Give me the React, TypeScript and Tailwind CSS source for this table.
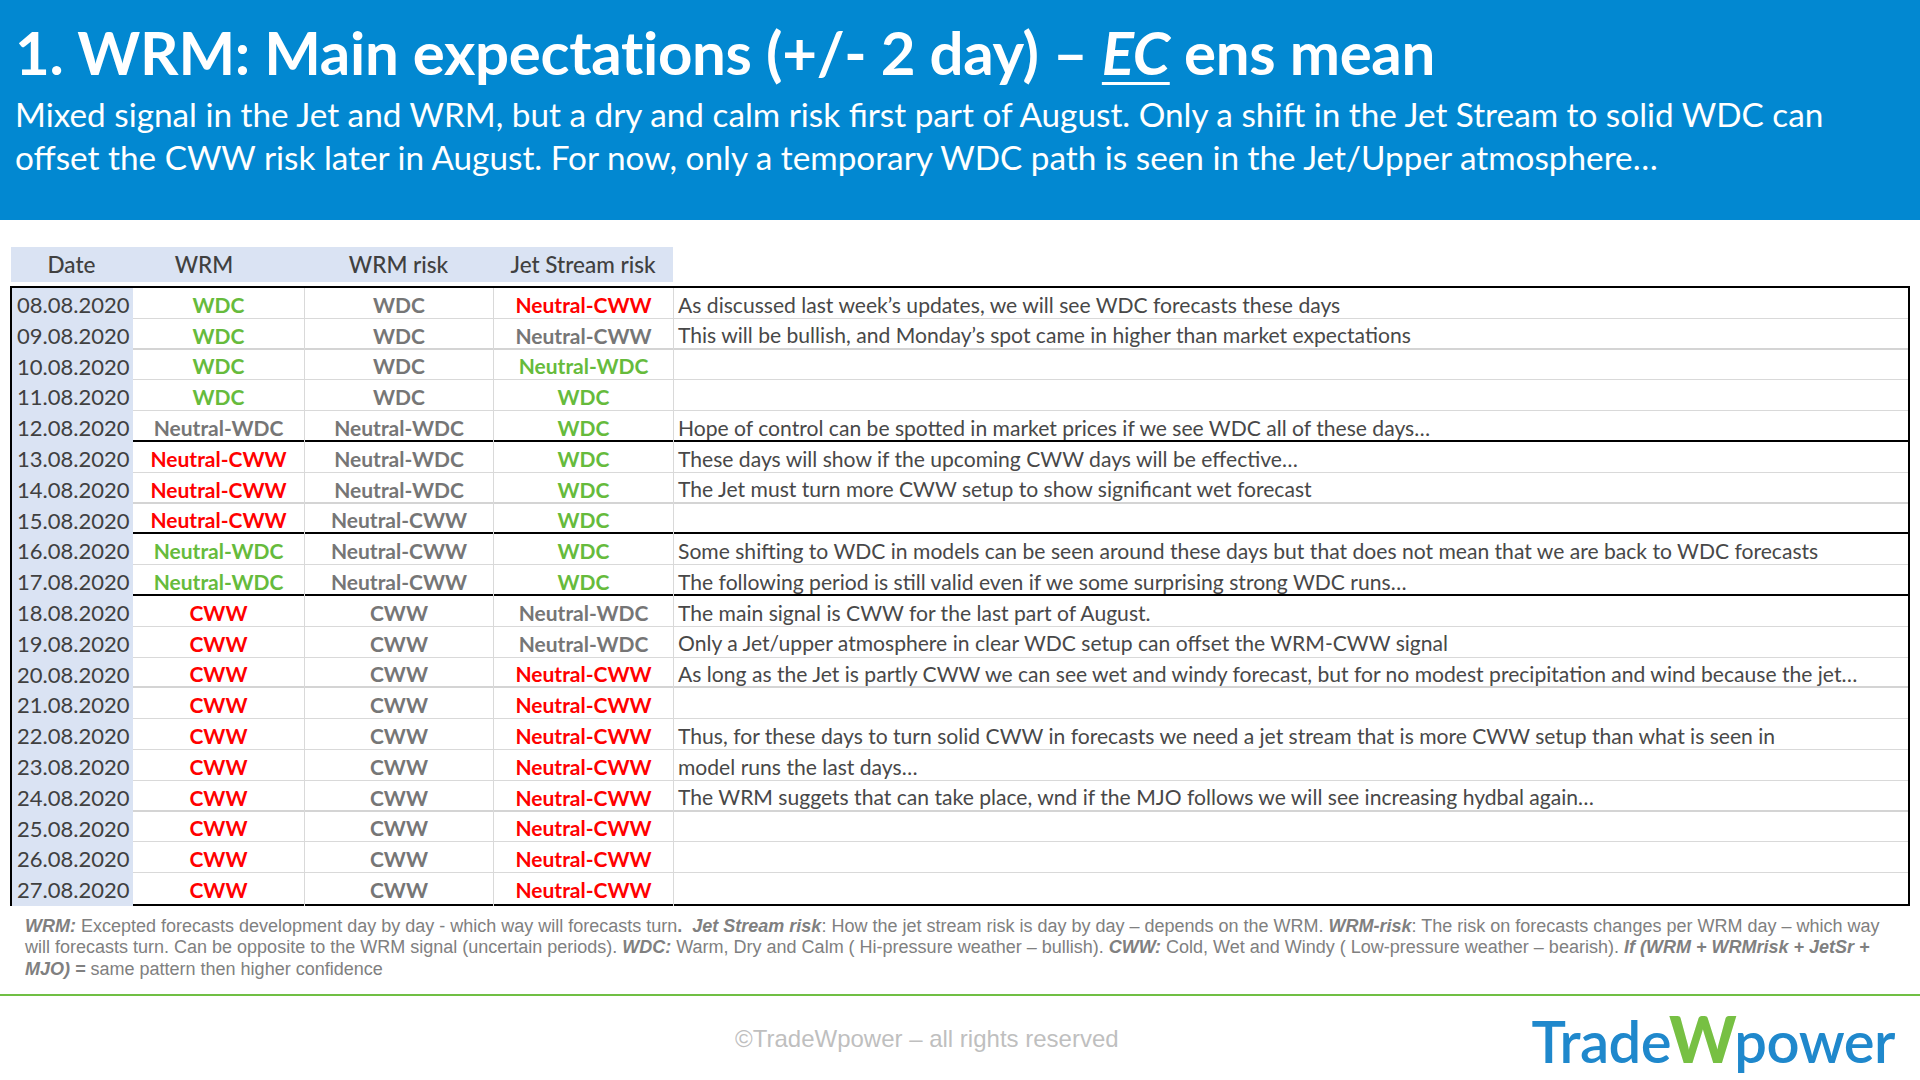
import React from "react";

type Tone = "g" | "r" | "n";

const tone: Record<Tone, string> = {
  g: "text-[#66bb3c]",
  r: "text-[#ff0000]",
  n: "text-[#767676]",
};

type Row = {
  date: string;
  wrm: [string, Tone];
  risk: [string, Tone];
  jet: [string, Tone];
  note?: string;
  line?: "group" | "soft";
};

const rows: Row[] = [
  { date: "08.08.2020", wrm: ["WDC", "g"], risk: ["WDC", "n"], jet: ["Neutral-CWW", "r"], note: "As discussed last week’s updates, we will see WDC forecasts these days" },
  { date: "09.08.2020", wrm: ["WDC", "g"], risk: ["WDC", "n"], jet: ["Neutral-CWW", "n"], note: "This will be bullish, and Monday’s spot came in higher than market expectations", line: "soft" },
  { date: "10.08.2020", wrm: ["WDC", "g"], risk: ["WDC", "n"], jet: ["Neutral-WDC", "g"] },
  { date: "11.08.2020", wrm: ["WDC", "g"], risk: ["WDC", "n"], jet: ["WDC", "g"] },
  { date: "12.08.2020", wrm: ["Neutral-WDC", "n"], risk: ["Neutral-WDC", "n"], jet: ["WDC", "g"], note: "Hope of control can be spotted in market prices if we see WDC all of these days…", line: "group" },
  { date: "13.08.2020", wrm: ["Neutral-CWW", "r"], risk: ["Neutral-WDC", "n"], jet: ["WDC", "g"], note: "These days will show if the upcoming CWW days will be effective…" },
  { date: "14.08.2020", wrm: ["Neutral-CWW", "r"], risk: ["Neutral-WDC", "n"], jet: ["WDC", "g"], note: "The Jet must turn more CWW setup to show significant wet forecast", line: "soft" },
  { date: "15.08.2020", wrm: ["Neutral-CWW", "r"], risk: ["Neutral-CWW", "n"], jet: ["WDC", "g"], line: "group" },
  { date: "16.08.2020", wrm: ["Neutral-WDC", "g"], risk: ["Neutral-CWW", "n"], jet: ["WDC", "g"], note: "Some shifting to WDC in models can be seen around these days but that does not mean that we are back to WDC forecasts" },
  { date: "17.08.2020", wrm: ["Neutral-WDC", "g"], risk: ["Neutral-CWW", "n"], jet: ["WDC", "g"], note: "The following period is still valid even if we some surprising strong WDC runs…", line: "group" },
  { date: "18.08.2020", wrm: ["CWW", "r"], risk: ["CWW", "n"], jet: ["Neutral-WDC", "n"], note: "The main signal is CWW for the last part of August." },
  { date: "19.08.2020", wrm: ["CWW", "r"], risk: ["CWW", "n"], jet: ["Neutral-WDC", "n"], note: "Only a Jet/upper atmosphere in clear WDC setup can offset the WRM-CWW signal" },
  { date: "20.08.2020", wrm: ["CWW", "r"], risk: ["CWW", "n"], jet: ["Neutral-CWW", "r"], note: "As long as the Jet is partly CWW we can see wet and windy forecast, but for no modest precipitation and wind because the jet…", line: "soft" },
  { date: "21.08.2020", wrm: ["CWW", "r"], risk: ["CWW", "n"], jet: ["Neutral-CWW", "r"] },
  { date: "22.08.2020", wrm: ["CWW", "r"], risk: ["CWW", "n"], jet: ["Neutral-CWW", "r"], note: "Thus, for these days to turn solid CWW in forecasts we need a jet stream that is more CWW setup than what is seen in" },
  { date: "23.08.2020", wrm: ["CWW", "r"], risk: ["CWW", "n"], jet: ["Neutral-CWW", "r"], note: "model runs the last days…" },
  { date: "24.08.2020", wrm: ["CWW", "r"], risk: ["CWW", "n"], jet: ["Neutral-CWW", "r"], note: "The WRM suggets that can take place, wnd if the MJO follows we will see increasing hydbal again…", line: "soft" },
  { date: "25.08.2020", wrm: ["CWW", "r"], risk: ["CWW", "n"], jet: ["Neutral-CWW", "r"] },
  { date: "26.08.2020", wrm: ["CWW", "r"], risk: ["CWW", "n"], jet: ["Neutral-CWW", "r"] },
  { date: "27.08.2020", wrm: ["CWW", "r"], risk: ["CWW", "n"], jet: ["Neutral-CWW", "r"] },
];

const cols = "grid grid-cols-[121px_172px_189px_180px_1fr]";

function Value({ v }: { v: [string, Tone] }) {
  return (
    <div className={`flex items-center justify-center font-bold text-[21px] border-r border-[#d9d9d9] ${tone[v[1]]}`}>
      {v[0]}
    </div>
  );
}

function TableRow({ row, last }: { row: Row; last: boolean }) {
  let border = "border-b border-[#d9d9d9]";
  if (row.line === "group") border = "border-b-2 border-black";
  if (row.line === "soft") border = "border-b-2 border-[#d4d4d4]";
  if (last) border = "";
  return (
    <div className={`${cols} h-[30.8px] ${border}`}>
      <div className="flex items-center bg-[#dae3f3] pl-[5px] text-[#404040] text-[22px]">{row.date}</div>
      <Value v={row.wrm} />
      <Value v={row.risk} />
      <Value v={row.jet} />
      <div className="flex items-center pl-[4px] text-[#484848] text-[21.1px] whitespace-nowrap">{row.note}</div>
    </div>
  );
}

export default function App() {
  return (
    <div className="w-[1920px] h-[1080px] overflow-hidden bg-white flex flex-col font-['Lato',sans-serif]">
      <header className="h-[220px] shrink-0 bg-[#0288d1] text-white px-[15px] pt-[16px]">
        <h1 className="text-[60px] font-bold leading-[72px] tracking-[-0.3px] whitespace-nowrap">
          1. WRM: Main expectations (+/- 2 day) – <span className="italic underline decoration-[3px] underline-offset-[7px]">EC</span> ens mean
        </h1>
        <p className="text-[33.3px] leading-[43px] mt-[5px] whitespace-nowrap">
          Mixed signal in the Jet and WRM, but a dry and calm risk first part of August. Only a shift in the Jet Stream to solid WDC can
          <br />
          offset the CWW risk later in August. For now, only a temporary WDC path is seen in the Jet/Upper atmosphere…
        </p>
      </header>

      <div className="ml-[11px] mt-[27px] w-[662px] h-[35px] grid grid-cols-[121px_172px_189px_180px] bg-[#dae3f3] text-[#404040] text-[22.5px] font-medium">
        <div className="flex items-center justify-center">Date</div>
        <div className="flex items-center justify-center pr-[28px]">WRM</div>
        <div className="flex items-center justify-center">WRM risk</div>
        <div className="flex items-center justify-center">Jet Stream risk</div>
      </div>

      <div className="ml-[10px] mt-[4px] w-[1900px] border-2 border-black">
        {rows.map((row, i) => (
          <TableRow key={row.date} row={row} last={i === rows.length - 1} />
        ))}
      </div>

      <p className="mx-[25px] mt-[10px] text-[18px] leading-[21.5px] text-[#808080] font-['Liberation_Sans',Arial,sans-serif] whitespace-nowrap">
        <b className="italic">WRM:</b> Excepted forecasts development day by day - which way will forecasts turn<b>.</b>&nbsp; <b className="italic">Jet Stream risk</b>: How the jet stream risk is day by day – depends on the WRM. <b className="italic">WRM-risk</b>: The risk on forecasts changes per WRM day – which way
        <br />
        will forecasts turn. Can be opposite to the WRM signal (uncertain periods). <b className="italic">WDC:</b> Warm, Dry and Calm ( Hi-pressure weather – bullish). <b className="italic">CWW:</b> Cold, Wet and Windy ( Low-pressure weather – bearish). <b className="italic">If (WRM + WRMrisk + JetSr +</b>
        <br />
        <b className="italic">MJO) =</b> same pattern then higher confidence
      </p>

      <div className="mt-[14px] h-[2px] bg-[#70bf44] shrink-0" />

      <div className="flex-1 flex items-center pt-[2px]">
        <div className="ml-[735px] text-[24px] text-[#bfbfbf] font-['Liberation_Sans',Arial,sans-serif] whitespace-nowrap">
          ©TradeWpower – all rights reserved
        </div>
        <div className="ml-auto mr-[25px] flex items-baseline text-[58px] font-semibold leading-none tracking-[-0.5px]">
          <span className="text-[#1f88cc]">Trade</span>
          <span className="text-[#77c043] font-black text-[64px] -mx-[2px]">W</span>
          <span className="text-[#1f88cc]">power</span>
        </div>
      </div>
    </div>
  );
}
